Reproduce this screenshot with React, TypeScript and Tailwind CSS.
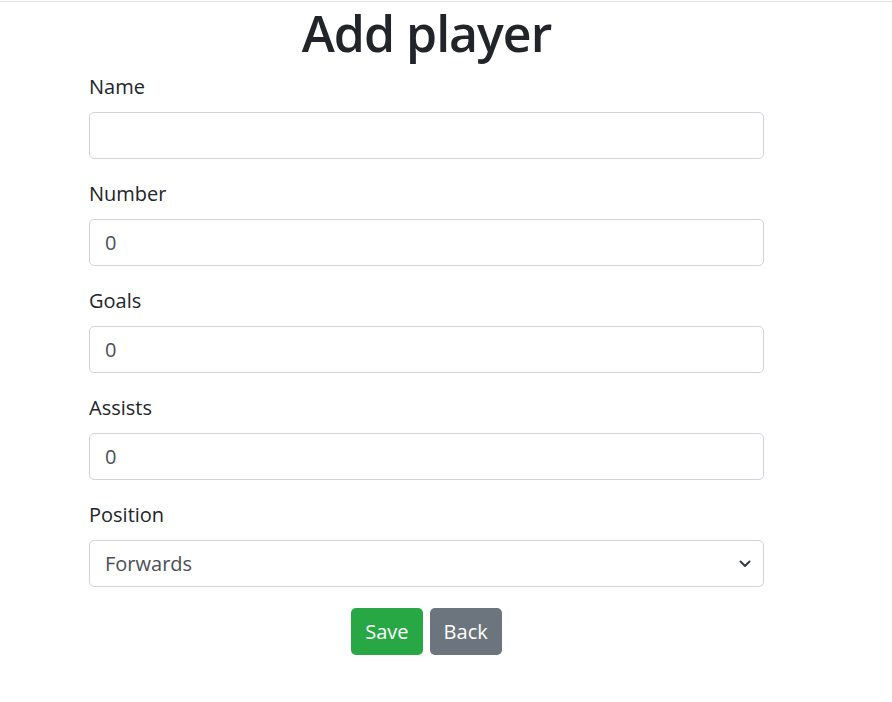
import React from "react";

const font = { fontFamily: '"Open Sans", "Noto Sans", Arial, sans-serif' };

function Field({ label, value }: { label: string; value: string }) {
  return (
    <div className="mb-[20px]">
      <label className="block mb-[10px] text-[20px] leading-[30px] text-[#212529]">{label}</label>
      <div className="h-[47px] w-full rounded-[5px] border border-[#ced4da] bg-white px-[15px] flex items-center text-[20px] text-[#495057]">
        {value}
      </div>
    </div>
  );
}

export default function App() {
  return (
    <div className="min-h-[702px] w-[892px] bg-white" style={font}>
      <div className="h-px bg-[#dee2e6] mt-px" />
      <div className="ml-[89px] w-[675px]">
        <h1 className="text-center text-[50px] leading-[68px] -mt-[3px] mb-[5px] font-semibold tracking-[-1px] text-[#212529]">Add player</h1>
        <Field label="Name" value="" />
        <Field label="Number" value="0" />
        <Field label="Goals" value="0" />
        <Field label="Assists" value="0" />
        <div className="mb-[21px]">
          <label className="block mb-[10px] text-[20px] leading-[30px] text-[#212529]">Position</label>
          <div className="h-[47px] w-full rounded-[5px] border border-[#ced4da] bg-white pl-[15px] pr-[12px] flex items-center justify-between text-[20px] text-[#495057]">
            <span>Forwards</span>
            <svg width="12" height="8" viewBox="0 0 12 8" fill="none">
              <path d="M1.5 1.5 L6 6 L10.5 1.5" stroke="#343a40" strokeWidth="2" strokeLinecap="round" strokeLinejoin="round" />
            </svg>
          </div>
        </div>
        <div className="flex justify-center gap-[7px]">
          <button className="h-[47px] px-[14px] rounded-[5px] bg-[#28a745] text-white text-[20px]">Save</button>
          <button className="h-[47px] px-[14px] rounded-[5px] bg-[#6c757d] text-white text-[20px]">Back</button>
        </div>
      </div>
    </div>
  );
}
